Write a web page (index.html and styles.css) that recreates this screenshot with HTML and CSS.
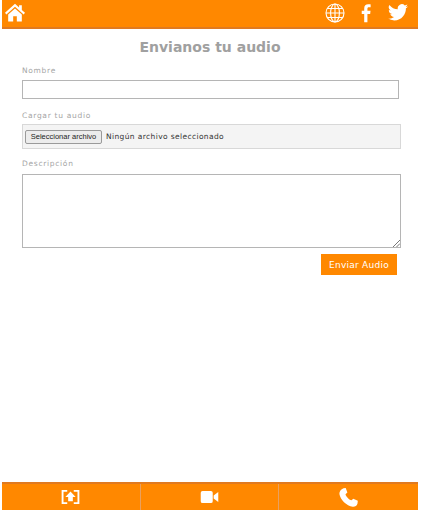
FILE: index.html
```html
<!DOCTYPE html>
<html lang="es">
<head>
<meta charset="utf-8">
<title>Envianos tu audio</title>
<link rel="stylesheet" href="styles.css">
</head>
<body>
<div class="app">
  <header class="topbar">
    <a class="home"><svg width="20" height="19" viewBox="0 0 22 20"><path fill="#fff" d="M11 .5 L15.500 4.500 V2 H18.500 V7.200 L22 10.400 L20.500 12.200 L11 3.800 L1.500 12.200 L0 10.400 Z M3.500 12.300 L11 5.600 L18.500 12.300 V20 H13 V14 H9 V20 H3.500 Z"/></svg></a>
    <div class="social">
      <svg width="20" height="20" viewBox="0 0 20 20" fill="none" stroke="#fff" stroke-width="1.100"><circle cx="10" cy="10" r="9"/><ellipse cx="10" cy="10" rx="4.400" ry="9"/><path d="M10 1V19M1 10H19M2.300 5.500H17.700M2.300 14.500H17.700"/></svg>
      <svg width="11" height="20" viewBox="0 0 12 20"><path fill="#fff" d="M3.500 20V11H.8V7.500H3.500V5C3.500 2 5.200.5 7.900.5c1.200 0 2.300.1 2.600.1V3.800H8.700C7.300 3.800 7 4.500 7 5.500V7.500H10.400L10 11H7V20Z"/></svg>
      <svg width="20" height="17" viewBox="0 0 24 20"><path fill="#fff" d="M24 2.400a9.800 9.800 0 0 1-2.800.8A5 5 0 0 0 23.300.500a9.800 9.800 0 0 1-3.100 1.200A4.900 4.900 0 0 0 11.800 6.200 14 14 0 0 1 1.700.900a4.900 4.900 0 0 0 1.500 6.600A4.900 4.900 0 0 1 1 6.900v.1a4.900 4.900 0 0 0 3.900 4.800 4.900 4.900 0 0 1-2.200.1 4.900 4.900 0 0 0 4.600 3.400A9.900 9.900 0 0 1 0 17.300 14 14 0 0 0 7.500 19.500c9.100 0 14-7.500 14-14v-.6A10 10 0 0 0 24 2.400Z"/></svg>
    </div>
  </header>
  <main class="content">
    <h1 class="title">Envianos tu audio</h1>
    <form class="form">
      <label class="label">Nombre</label>
      <div class="field name-field"></div>
      <label class="label">Cargar tu audio</label>
      <div class="file-row"><span class="file-btn">Seleccionar archivo</span><span class="file-text">Ningún archivo seleccionado</span></div>
      <label class="label">Descripción</label>
      <div class="field desc-field">
        <svg class="grip" width="8" height="8" viewBox="0 0 8 8" stroke="#777" stroke-width="1"><path d="M1 8L8 1M4.500 8L8 4.500"/></svg>
      </div>
      <div class="actions"><span class="submit">Enviar Audio</span></div>
    </form>
  </main>
  <nav class="bottombar">
    <a class="tab"><svg width="19" height="14" viewBox="0 0 19 15"><path fill="#fff" d="M0 0H6V2H2V13H6V15H0ZM19 0H13V2H17V13H13V15H19ZM9.500 1.500L15 7.500H12V12H7V7.500H4Z"/></svg></a>
    <a class="tab"><svg width="19" height="12" viewBox="0 0 19 13"><path fill="#fff" d="M2 0H11A2 2 0 0 1 13 2V11A2 2 0 0 1 11 13H2A2 2 0 0 1 0 11V2A2 2 0 0 1 2 0ZM14 5L19 1V12L14 8Z"/></svg></a>
    <a class="tab"><svg width="19" height="19" viewBox="0 0 19 19"><path fill="#fff" d="M4.500.3L6.700 0 8.400 4.600 6.500 6.200C7 8.500 9.800 11.500 12.500 12.300L14.300 10.700 18.800 12.800 18.500 15.500C18 17.800 15.800 19 13.800 18.800 7.500 18 1.200 11.500.4 6 .2 3.500 2 1.200 4.500.3Z"/></svg></a>
  </nav>
</div>
</body>
</html>
```
FILE: styles.css
```css
* { box-sizing: border-box; }
html, body { margin: 0; padding: 0; background: #fff; }
body { font-family: "DejaVu Sans", Verdana, sans-serif; overflow: hidden; }
.app { width: 421px; height: 512px; padding: 0 3px 2px 2px; display: flex; flex-direction: column; }
.topbar { height: 29px; flex: none; background: #ff8800; border-bottom: 2px solid #e07a20; display: flex; justify-content: space-between; align-items: center; padding: 0 10px 2px 3px; }
.home { display: flex; }
.social { display: flex; align-items: center; gap: 16px; }
.content { flex: 1; padding: 0 17px 0 20px; }
.title { margin: 10px 0 0; font-size: 14px; line-height: 17px; font-weight: bold; text-align: center; color: #a0a0a0; padding-right: 3px; }
.form { display: flex; flex-direction: column; }
.label { display: block; margin-top: 11px; font-size: 7.500px; line-height: 10px; letter-spacing: .7px; color: #a5a5a5; }
.title + .form .label:first-child { margin-top: 10px; }
.field { background: #fff; border: 1px solid #b5b5b5; }
.name-field { width: 377px; height: 19px; margin-top: 4px; margin-bottom: 1px; }
.file-row { height: 25px; margin-top: 3px; margin-bottom: -1px; background: #f4f4f4; border: 1px solid #d8d8d8; display: flex; align-items: center; padding-left: 2px; }
.file-btn { font-family: "Liberation Sans", Arial, sans-serif; font-size: 7.500px; line-height: 10px; color: #222; padding: 1px 3px; background: #ececec; border: 1px solid #9a9a9a; border-radius: 2px; width: 77px; white-space: nowrap; text-align: center; }
.file-text { font-size: 7.500px; margin-left: 4px; letter-spacing: .38px; color: #333; }
.desc-field { height: 74px; margin-top: 5px; position: relative; }
.grip { position: absolute; right: 0; bottom: 0; }
.actions { display: flex; justify-content: flex-end; padding-right: 4px; margin-top: 6px; }
.submit { width: 76px; height: 21px; background: #ff8800; color: #fff; font-size: 9px; letter-spacing: .25px; display: flex; align-items: center; justify-content: center; }
.bottombar { height: 28px; flex: none; background: #ff8800; border-top: 2px solid #e07a20; display: grid; grid-template-columns: 138px 138px 1fr; }
.tab { display: flex; align-items: center; justify-content: center; border-left: 1px solid #e8a060; }
.tab:first-child { border-left: 0; padding-right: 1px; }
```
